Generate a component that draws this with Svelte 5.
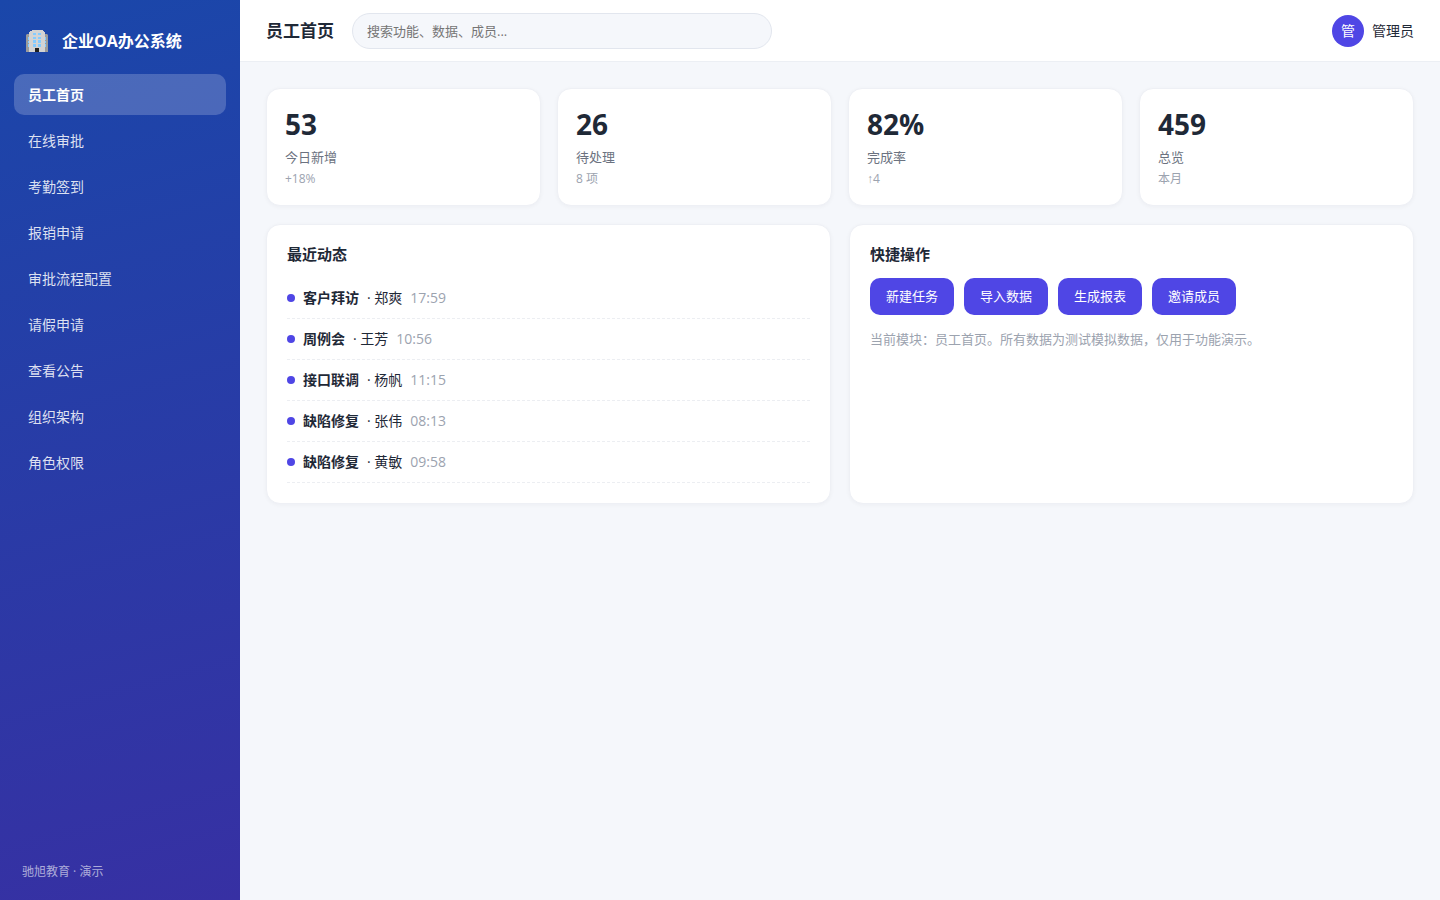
<script>
  const nav = ['员工首页', '在线审批', '考勤签到', '报销申请', '审批流程配置', '请假申请', '查看公告', '组织架构', '角色权限'];
  const stats = [
    { value: '53', label: '今日新增', note: '+18%' },
    { value: '26', label: '待处理', note: '8 项' },
    { value: '82%', label: '完成率', note: '↑4' },
    { value: '459', label: '总览', note: '本月' }
  ];
  const events = [
    { title: '客户拜访', who: '郑爽', time: '17:59' },
    { title: '周例会', who: '王芳', time: '10:56' },
    { title: '接口联调', who: '杨帆', time: '11:15' },
    { title: '缺陷修复', who: '张伟', time: '08:13' },
    { title: '缺陷修复', who: '黄敏', time: '09:58' }
  ];
  const actions = ['新建任务', '导入数据', '生成报表', '邀请成员'];
  let current = $state('员工首页');
</script>

<div class="app">
  <aside>
    <div class="brand">
      <svg width="22" height="22" viewBox="0 0 22 22" aria-hidden="true">
        <path d="M0 5l1-1h3v18H0zM18 4h3l1 1v17h-4z" fill="#9b9b9b" />
        <path d="M3 22V2h1V1h2V0h11v1h1v1h1v20z" fill="#d3d3d3" />
        <path d="M7 3h3v2H7zM12 3h3v2h-3zM7 7h3v2H7zM12 7h3v2h-3zM7 10h3v3H7zM12 10h3v3h-3zM7 14h3v3H7zM12 14h3v3h-3zM2 7h1v3H2zM2 11h1v2H2zM2 14h1v3H2zM19 7h1v3h-1zM19 11h1v2h-1zM19 14h1v3h-1z" fill="#83cbff" />
        <path d="M9 18h4v4H9z" fill="#212121" />
      </svg>
      <span>企业OA办公系统</span>
    </div>
    <nav>
      {#each nav as item}
        <button type="button" class:active={current === item} onclick={() => (current = item)}>{item}</button>
      {/each}
    </nav>
    <footer>驰旭教育 · 演示</footer>
  </aside>
  <div class="main">
    <header>
      <h1>{current}</h1>
      <input type="search" aria-label="搜索" placeholder="搜索功能、数据、成员..." />
      <div class="user"><span class="avatar">管</span><span>管理员</span></div>
    </header>
    <main>
      <section class="stats">
        {#each stats as s}
          <div class="card stat">
            <div class="value">{s.value}</div>
            <div class="label">{s.label}</div>
            <div class="note">{s.note}</div>
          </div>
        {/each}
      </section>
      <div class="panels">
        <section class="card panel">
          <h2>最近动态</h2>
          <ul>
            {#each events as e}
              <li><i></i><strong>{e.title}</strong><span>· {e.who}</span><time>{e.time}</time></li>
            {/each}
          </ul>
        </section>
        <section class="card panel">
          <h2>快捷操作</h2>
          <div class="actions">
            {#each actions as a}
              <button type="button">{a}</button>
            {/each}
          </div>
          <p>当前模块：{current}。所有数据为测试模拟数据，仅用于功能演示。</p>
        </section>
      </div>
    </main>
  </div>
</div>

<style>
  :global(body) { margin: 0; }
  .app, .app * { box-sizing: border-box; }
  .app {
    display: flex;
    min-height: 100vh;
    background: #f5f7fb;
    color: #1f2937;
    font: 14px/20px "Open Sans", "Noto Sans CJK SC", sans-serif;
  }
  button, input { font-family: inherit; }
  button { border: 0; cursor: pointer; }
  aside {
    width: 240px;
    flex: none;
    display: flex;
    flex-direction: column;
    padding: 18px 14px;
    color: #fff;
    background: linear-gradient(165deg, #1a47aa, #3730a3);
  }
  .brand {
    display: flex;
    align-items: center;
    gap: 14px;
    padding: 10px 12px 20px;
    font-size: 16px;
    line-height: 26px;
    font-weight: 700;
  }
  nav { display: flex; flex-direction: column; gap: 5px; }
  nav button {
    height: 41px;
    padding: 0 14px 2px;
    border-radius: 10px;
    background: none;
    color: rgba(255, 255, 255, 0.85);
    font-size: 14px;
    text-align: left;
  }
  nav button.active { background: rgba(255, 255, 255, 0.2); color: #fff; font-weight: 600; }
  footer {
    margin-top: auto;
    padding: 0 8px;
    font-size: 12px;
    color: rgba(255, 255, 255, 0.6);
  }
  .main { flex: 1; min-width: 0; }
  header {
    display: flex;
    align-items: center;
    gap: 18px;
    height: 62px;
    padding: 0 26px;
    background: #fff;
    border-bottom: 1px solid #eceff4;
  }
  h1 { margin: 0; font-size: 17px; line-height: 24px; font-weight: 700; }
  input {
    width: 420px;
    height: 36px;
    padding: 0 14px;
    border: 1px solid #e2e6ee;
    border-radius: 18px;
    background: #f5f7fb;
    font-size: 13px;
    outline: none;
  }
  input::placeholder { color: #757575; }
  .user { display: flex; align-items: center; gap: 8px; margin-left: auto; }
  .avatar {
    display: grid;
    place-items: center;
    width: 32px;
    height: 32px;
    border-radius: 50%;
    background: #4f46e5;
    color: #fff;
    font-size: 14px;
  }
  main { padding: 26px; }
  .card {
    background: #fff;
    border: 1px solid #eef0f5;
    border-radius: 14px;
    box-shadow: 0 1px 4px rgba(15, 23, 42, 0.04);
  }
  .stats { display: grid; grid-template-columns: repeat(4, 1fr); gap: 16px; margin-bottom: 18px; }
  .stat { padding: 18px 18px 17px; }
  .value { font-size: 28px; line-height: 34px; font-weight: 700; }
  .label { margin-top: 6px; font-size: 13px; color: #6b7280; }
  .note {
    margin-top: 3px;
    font-family: "Open Sans", "Liberation Sans", "Noto Sans CJK SC", sans-serif;
    font-size: 12px;
    line-height: 18px;
    color: #9ca3af;
  }
  .panels { display: grid; grid-template-columns: 1fr 1fr; gap: 18px; }
  .panel { padding: 20px; }
  h2 { margin: 0 0 14px; font-size: 15px; line-height: 19px; font-weight: 700; }
  ul { margin: 0; padding: 0; list-style: none; }
  li {
    display: flex;
    align-items: center;
    gap: 8px;
    padding: 10px 0;
    border-bottom: 1px dashed #eceef2;
  }
  i { width: 8px; height: 8px; border-radius: 50%; background: #4f46e5; }
  time { color: #9ca3af; }
  .actions { display: flex; flex-wrap: wrap; gap: 10px; }
  .actions button {
    height: 37px;
    padding: 0 16px 2px;
    border-radius: 10px;
    background: #4f46e5;
    color: #fff;
    font-size: 13px;
  }
  p { margin: 14px 0 0; font-size: 13px; color: #9ca3af; }
</style>
